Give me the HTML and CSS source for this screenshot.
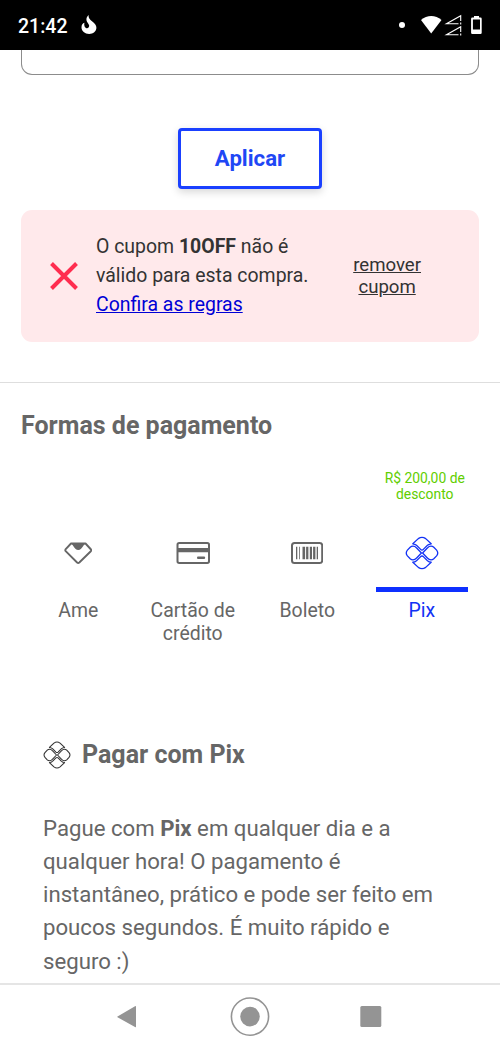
FILE: index.html
```html
<!DOCTYPE html>
<html lang="pt-BR">
<head>
<meta charset="utf-8">
<title>Formas de pagamento</title>
<link rel="stylesheet" href="styles.css">
</head>
<body>
<svg class="defs" width="0" height="0">
  <symbol id="pix" viewBox="-17 -17 34 34">
    <g fill="none" stroke="currentColor" stroke-width="1.3" stroke-linejoin="round">
      <path d="M-9.200 -9.200 L-3.700 -14.400 Q0 -17 3.700 -14.400 L9.200 -9.200 Q7 -9 5.500 -7.700 L1.300 -3.600 Q0 -2.400 -1.300 -3.600 L-5.500 -7.700 Q-7 -9 -9.200 -9.200Z"/>
      <path d="M9.200 9.200 L3.700 14.400 Q0 17 -3.700 14.400 L-9.200 9.200 Q-7 9 -5.500 7.700 L-1.300 3.600 Q0 2.400 1.300 3.600 L5.500 7.700 Q7 9 9.200 9.200Z"/>
      <path d="M-.6 0 L-5.600 -5.200 Q-7 -6.900 -9 -6.900 Q-10.600 -6.900 -11.800 -5.800 L-14.600 -2.900 Q-16.900 0 -14.600 2.900 L-11.800 5.800 Q-10.600 6.900 -9 6.900 Q-7 6.900 -5.600 5.200Z"/>
      <path d="M.6 0 L5.600 -5.200 Q7 -6.900 9 -6.900 Q10.600 -6.900 11.800 -5.800 L14.600 -2.900 Q16.900 0 14.600 2.900 L11.800 5.800 Q10.600 6.900 9 6.900 Q7 6.900 5.600 5.200Z"/>
    </g>
  </symbol>
</svg>
<div class="screen">
  <header class="status">
    <span class="clock">21:42</span>
    <svg class="flame" width="16" height="20" viewBox="0 0 16 20"><path fill="#fff" d="M7.600 0C7.300 2.800 8.600 4.400 11.300 6.600C13.900 8.800 15.400 10.400 15.400 12.800C15.400 16.500 12 19 8.200 19C3.800 19 .5 16.200 .5 12.300C.5 9.800 1.700 8.300 3.500 7.800C2.900 9.400 3.400 12.700 5.400 13.200C7.200 13.600 8.500 12 8.100 10.300C7.600 8.700 6.100 7.600 5.600 5.800C5 3.400 6 1.400 7.600 0Z"/></svg>
    <svg class="signals" width="86" height="22" viewBox="0 0 86 22">
      <circle cx="5" cy="11" r="3" fill="#fff"/>
      <path fill="#fff" d="M24 6C30 .8 38.500 .8 44.500 6L34.200 19.600Z"/>
      <g fill="none" stroke="#fff" stroke-width="1.100"><path d="M61.500 9.700H49.500L63.700 1.700V7M63.700 8.600V10.400"/><path d="M61.500 20.700H49.500L63.700 12.700V18M63.700 19.600V21.400"/></g>
      <path fill="#fff" fill-rule="evenodd" d="M77 2H82V3.500H83.500Q84.700 3.500 84.700 4.700V18.800Q84.700 20 83.500 20H75.300Q74.100 20 74.100 18.800V4.700Q74.100 3.500 75.300 3.500H77ZM75.900 5.500V15.500H83V5.500Z"/>
    </svg>
  </header>
  <main class="content">
    <div class="field"></div>
    <button class="apply">Aplicar</button>
    <section class="alert">
      <svg class="cross" width="28" height="28" viewBox="0 0 28 28"><path d="M1.500 1.500L26.500 26.500M26.500 1.500L1.500 26.500" stroke="#ff2d4f" stroke-width="4"/></svg>
      <p class="message">O cupom <b>10OFF</b> não é<br>válido para esta compra.<br><a class="rules" href="#">Confira as regras</a></p>
      <a class="remove" href="#">remover<br>cupom</a>
    </section>
    <hr class="divider">
    <h2 class="title">Formas de pagamento</h2>
    <nav class="methods">
      <div class="method"><div class="discount"></div><div class="icon">
        <svg width="28" height="24" viewBox="0 0 28 24"><path d="M7 2.500H21.500L27 8.500Q27.500 9.300 26.800 10.200L15.300 21.500Q14.200 22.500 13.100 21.500L1.700 10.200Q1 9.300 1.500 8.300Z" fill="none" stroke="#666" stroke-width="1.900" stroke-linejoin="round"/><path d="M7 2.500H21.500C19 3.800 18.500 8.500 14.300 9C10 8.500 9.500 3.800 7 2.500Z" fill="#666"/></svg>
      </div><div class="bar"></div><span class="label">Ame</span></div>
      <div class="method"><div class="discount"></div><div class="icon">
        <svg width="34" height="22" viewBox="0 0 34 22"><rect x="1.500" y="1" width="31.500" height="20" rx="1.700" fill="none" stroke="#666" stroke-width="2"/><path fill="#666" d="M1.500 6H33V10.200H1.500ZM22 14.500H28Q29.200 14.500 29.200 15.700T28 16.900H22Q21 16.900 21 15.700T22 14.500Z"/></svg>
      </div><div class="bar"></div><span class="label">Cartão de crédito</span></div>
      <div class="method"><div class="discount"></div><div class="icon">
        <svg width="32" height="22" viewBox="0 0 32 22"><rect x="1" y="1" width="30.200" height="20" rx="2.500" fill="none" stroke="#666" stroke-width="2"/><path fill="#666" d="M5 4.800h1.300v12.500H5zM8.200 4.800h.8v12.500h-.8zM11.500 4.800h2.600v12.500h-2.600zM15.100 4.800h2.300v12.500h-2.300zM18.800 4.800h2.200v12.500h-2.200zM22.100 4.800h2.300v12.500h-2.300zM25.700 4.800h1.300v12.500h-1.300z"/></svg>
      </div><div class="bar"></div><span class="label">Boleto</span></div>
      <div class="method active"><div class="discount">R$ 200,00 de<br>desconto</div><div class="icon">
        <svg width="34" height="34"><use href="#pix"/></svg>
      </div><div class="bar"></div><span class="label">Pix</span></div>
    </nav>
    <section class="pay">
      <h3 class="pay-title"><svg class="pay-icon" width="28" height="28"><use href="#pix"/></svg>Pagar com Pix</h3>
      <p class="text">Pague com <b>Pix</b> em qualquer dia e a<br>qualquer hora! O pagamento é<br>instantâneo, prático e pode ser feito em<br>poucos segundos. É muito rápido e<br>seguro :)</p>
    </section>
  </main>
  <footer class="navbar">
    <svg width="500" height="66" viewBox="0 0 500 66" fill="#949494">
      <path d="M117.500 31.500L135 21.200Q136 20.700 136 21.800V41.500Q136 42.600 135 42L117.500 32.200Q116.800 31.800 117.500 31.500Z"/>
      <circle cx="250" cy="31.600" r="18.600" fill="none" stroke="#949494" stroke-width="1.600"/><circle cx="250" cy="31.600" r="9.800"/>
      <rect x="360.300" y="21" width="21" height="21" rx="1.500"/>
    </svg>
  </footer>
</div>
</body>
</html>
```
FILE: styles.css
```css
* { box-sizing: border-box; margin: 0; padding: 0; }
body { font-family: Roboto, sans-serif; background: #fff; color: #666; }
.defs { display: block; height: 0; }
.screen { display: flex; flex-direction: column; width: 500px; height: 1050px; overflow: hidden; }
.status { display: flex; align-items: center; flex: none; height: 50px; padding: 3px 14px 0 18px; background: #000; color: #fff; }
.clock { font-size: 19.5px; font-weight: 500; line-height: 24px; }
.flame { margin: -3px 0 0 14px; }
.signals { margin: -3px 3px 0 auto; }
.content { display: flex; flex-direction: column; flex: 1; min-height: 0; overflow: hidden; padding: 0 21px; }
.field { flex: none; height: 25px; border: 1px solid #8c8c8c; border-top: 0; border-radius: 0 0 11px 11px; }
.apply { flex: none; align-self: center; width: 144px; height: 61px; margin-top: 53px; padding-bottom: 2px; border: 3px solid #1a40ff; border-radius: 4px; background: #fff; color: #1f47f5; font: 700 22.2px/30px Roboto, sans-serif; box-shadow: 0 3px 8px rgba(0,0,0,.16); }
.alert { display: flex; align-items: center; flex: none; height: 132px; margin-top: 21px; padding: 0 58px 0 29px; border-radius: 11px; background: #ffe9eb; color: #333; font-size: 19.45px; }
.cross { flex: none; }
.message { margin: -1px 0 0 18px; line-height: 29px; white-space: nowrap; }
.rules { color: #0000d6; }
.remove { margin-left: auto; color: #333; font-size: 18.6px; line-height: 22px; text-align: center; }
.divider { flex: none; height: 1px; margin: 40px -21px 0; border: 0; background: #dedede; }
.title { flex: none; margin-top: 28px; font-size: 25px; line-height: 30px; }
.methods { display: grid; grid-template-columns: repeat(4, 1fr); flex: none; margin-top: 28px; }
.method { display: flex; flex-direction: column; align-items: center; }
.discount { height: 34px; padding-top: .5px; margin-left: 6px; color: #61ce00; font-size: 13.9px; line-height: 16.7px; text-align: center; white-space: nowrap; }
.icon { display: flex; align-items: center; justify-content: center; height: 84px; padding-top: 16px; }
.bar { width: 92px; height: 5px; }
.label { width: 100px; margin-top: 7px; font-size: 19.45px; line-height: 23px; text-align: center; }
.active { color: #1232f5; }
.active .bar { background: #0e30ff; }
.pay { margin-top: 95px; padding-left: 22px; }
.pay-title { display: flex; align-items: center; font-size: 25px; line-height: 30px; }
.pay-icon { margin-right: 11px; color: #333; }
.text { margin-top: 41.6px; font-size: 22.2px; line-height: 33.3px; white-space: nowrap; }
.navbar { flex: none; height: 67px; border-top: 2px solid #e5e5e5; }
.navbar svg { display: block; }
```
